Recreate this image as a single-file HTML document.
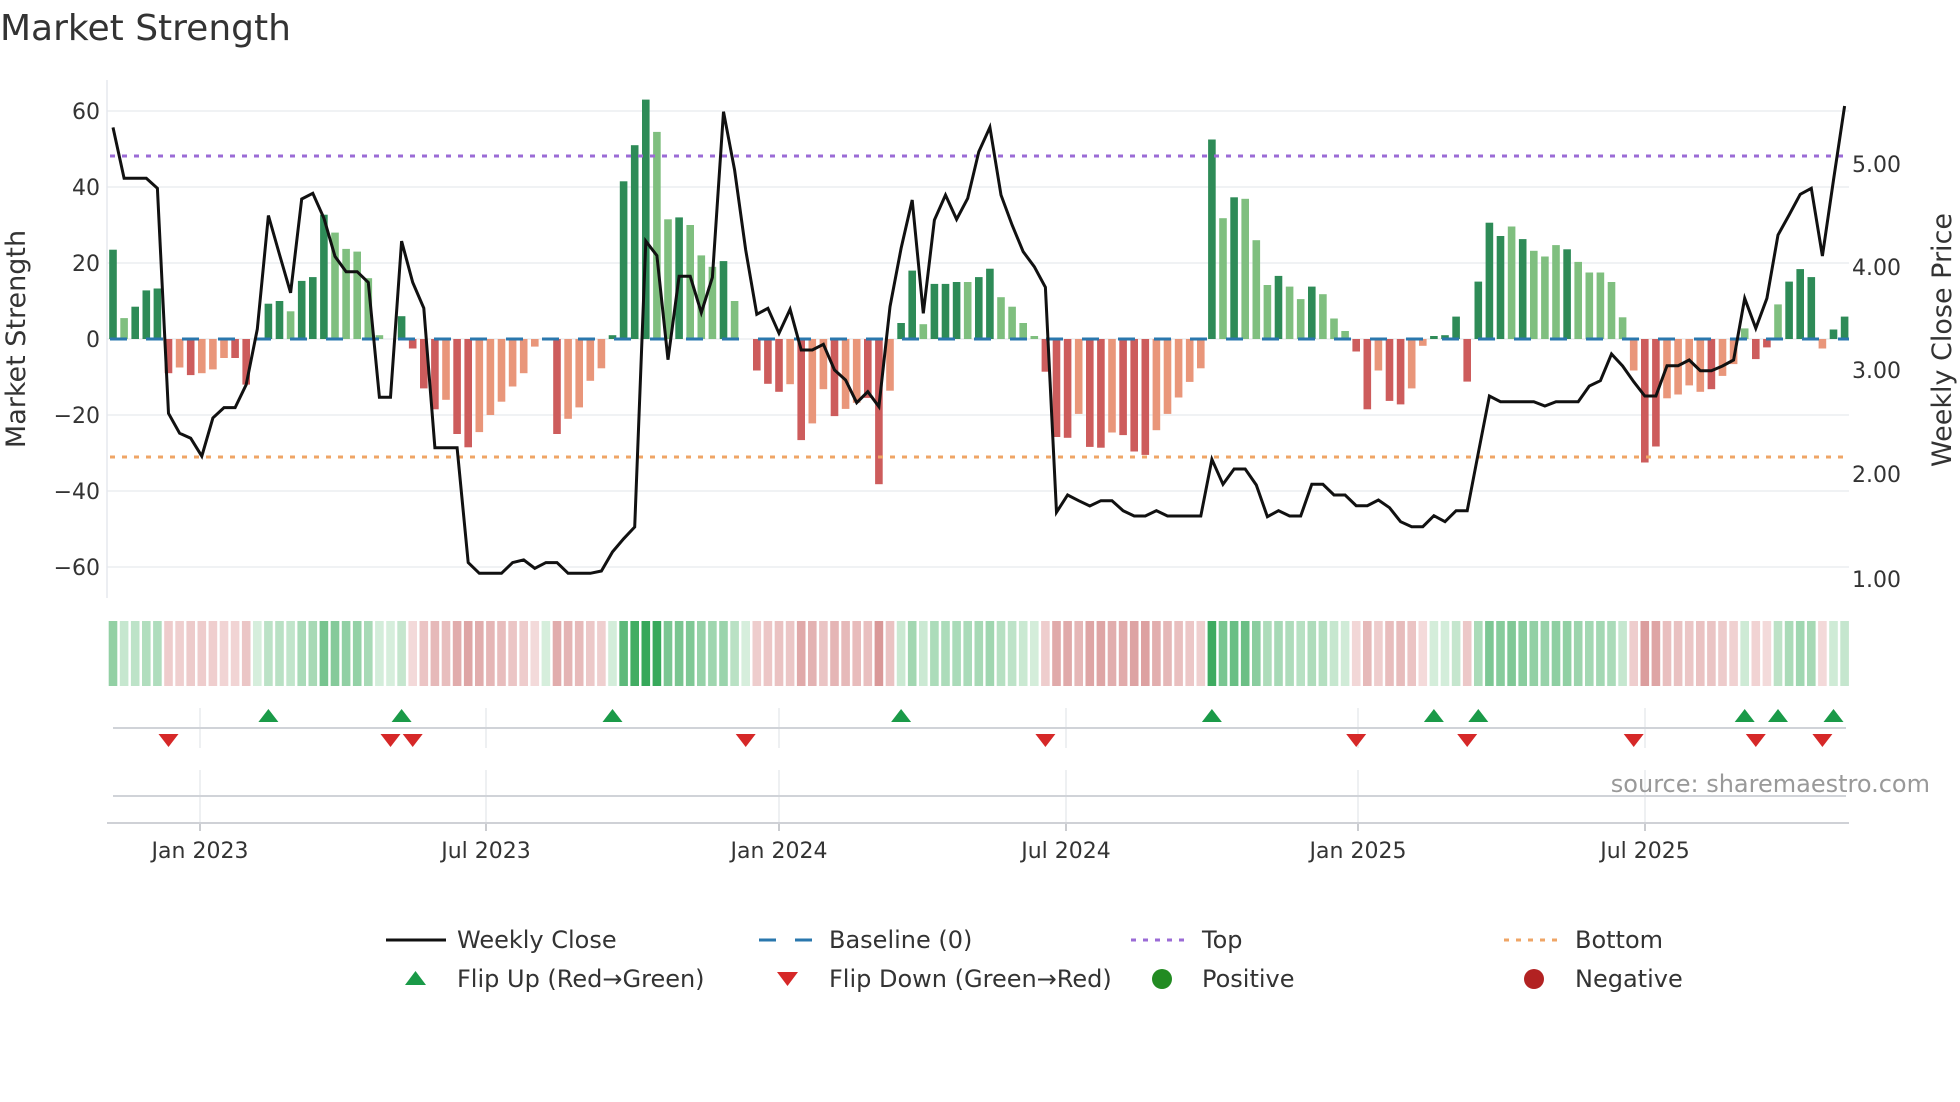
<!DOCTYPE html>
<html><head><meta charset="utf-8">
<style>
html,body{margin:0;padding:0;background:#fff;}
svg{display:block;font-family:"DejaVu Sans","Liberation Sans",sans-serif;}
</style></head>
<body>
<svg id="s" width="1960" height="1102" viewBox="0 0 1960 1102" xmlns="http://www.w3.org/2000/svg">
<rect width="1960" height="1102" fill="#fff"/>
<text x="0" y="40" font-size="36" fill="#333">Market Strength</text>

<g stroke="#eceef1" stroke-width="1.5">
<line x1="107" x2="1849" y1="111" y2="111"/>
<line x1="107" x2="1849" y1="187" y2="187"/>
<line x1="107" x2="1849" y1="263" y2="263"/>
<line x1="107" x2="1849" y1="339" y2="339"/>
<line x1="107" x2="1849" y1="415" y2="415"/>
<line x1="107" x2="1849" y1="491" y2="491"/>
<line x1="107" x2="1849" y1="567" y2="567"/>
</g>
<line x1="107" x2="107" y1="80" y2="598" stroke="#e6e8ee" stroke-width="1.5"/>

<g font-size="22" fill="#333" text-anchor="end">
<text x="100" y="119">60</text>
<text x="100" y="195">40</text>
<text x="100" y="271">20</text>
<text x="100" y="347">0</text>
<text x="100" y="423">−20</text>
<text x="100" y="499">−40</text>
<text x="100" y="575">−60</text>
</g>
<g font-size="22" fill="#333">
<text x="1852" y="172">5.00</text>
<text x="1852" y="275">4.00</text>
<text x="1852" y="378">3.00</text>
<text x="1852" y="482">2.00</text>
<text x="1852" y="587">1.00</text>
</g>
<text transform="translate(25,339) rotate(-90)" font-size="27" fill="#333" text-anchor="middle">Market Strength</text>
<text transform="translate(1951,340) rotate(-90)" font-size="27" fill="#333" text-anchor="middle">Weekly Close Price</text>

<g id="bars"></g>
<line x1="110" x2="1849" y1="339" y2="339" stroke="#2a77ad" stroke-width="3" stroke-dasharray="17 19"/>
<line x1="110" x2="1849" y1="156" y2="156" stroke="#9b6bd6" stroke-width="3" stroke-dasharray="5 7"/>
<line x1="110" x2="1849" y1="457" y2="457" stroke="#efa566" stroke-width="3" stroke-dasharray="5 7"/>
<polyline id="close" fill="none" stroke="#111" stroke-width="3" stroke-linejoin="miter"/>

<g id="heat"></g>

<g stroke="#e8eaee" stroke-width="1.5" id="vgrid"></g>
<line x1="113" x2="1846" y1="728" y2="728" stroke="#d0d3d8" stroke-width="2"/>
<line x1="113" x2="1846" y1="796" y2="796" stroke="#d0d3d8" stroke-width="2"/>
<line x1="107" x2="1849" y1="823" y2="823" stroke="#cfd1d6" stroke-width="2"/>
<g id="marks"></g>
<text x="1930" y="792" font-size="24" fill="#999" text-anchor="end">source: sharemaestro.com</text>

<g font-size="22" fill="#333" text-anchor="middle">
<text x="200" y="858">Jan 2023</text>
<text x="486" y="858">Jul 2023</text>
<text x="779" y="858">Jan 2024</text>
<text x="1066" y="858">Jul 2024</text>
<text x="1358" y="858">Jan 2025</text>
<text x="1645" y="858">Jul 2025</text>
</g>

<line x1="386" x2="446" y1="940" y2="940" stroke="#111" stroke-width="3"/>
<line x1="759" x2="813" y1="940" y2="940" stroke="#2a77ad" stroke-width="3" stroke-dasharray="17 19"/>
<line x1="1131" x2="1186" y1="940" y2="940" stroke="#9b6bd6" stroke-width="3" stroke-dasharray="5 7"/>
<line x1="1504" x2="1558" y1="940" y2="940" stroke="#efa566" stroke-width="3" stroke-dasharray="5 7"/>
<polygon points="405,985 426,985 415.5,971" fill="#1a9a48"/>
<polygon points="777,972 798,972 787.5,986" fill="#d62828"/>
<circle cx="1162" cy="979" r="10" fill="#228b22"/>
<circle cx="1534" cy="979" r="10" fill="#b22222"/>
<g font-size="24" fill="#333">
<text x="457" y="948">Weekly Close</text>
<text x="829" y="948">Baseline (0)</text>
<text x="1202" y="948">Top</text>
<text x="1575" y="948">Bottom</text>
<text x="457" y="987">Flip Up (Red→Green)</text>
<text x="829" y="987">Flip Down (Green→Red)</text>
<text x="1202" y="987">Positive</text>
<text x="1575" y="987">Negative</text>
</g>
</svg>
<script>
(function(){
var NS="http://www.w3.org/2000/svg";
var v=[23.5,5.5,8.5,12.8,13.3,-9,-7.5,-9.5,-9,-8,-5,-5,-12,0,9.3,10,7.3,15.3,16.3,32.7,28,23.7,23,16,1,0,6,-2.5,-13,-18.5,-16,-25,-28.5,-24.5,-20,-16.5,-12.5,-9,-2,0,-25,-21,-18,-11,-7.7,1,41.5,51,63,54.5,31.5,32,30,22,19,20.5,10,0,-8.3,-11.8,-13.9,-11.9,-26.6,-22.2,-13.2,-20.3,-18.4,-16.8,-15.5,-38.2,-13.6,4.2,18,3.9,14.5,14.5,15,15,16.3,18.5,11,8.5,4.2,0.8,-8.6,-25.8,-26,-19.7,-28.4,-28.6,-24.6,-25.3,-29.6,-30.5,-24,-19.7,-15.4,-11.3,-7.7,52.5,31.8,37.3,36.9,26,14.2,16.6,13.8,10.5,13.8,11.8,5.4,2.1,-3.3,-18.5,-8.3,-16.3,-17.2,-13,-1.8,0.8,1,5.9,-11.2,15.1,30.6,27.1,29.6,26.3,23.2,21.7,24.7,23.6,20.3,17.5,17.5,15,5.7,-8.3,-32.5,-28.3,-15.6,-14.6,-12.2,-13.9,-13.2,-9.7,-6.6,2.8,-5.3,-2.2,9.1,15.1,18.4,16.3,-2.5,2.5,5.9];
var d="DLDDDDLDLLLDDXDDLDDDLLLLLXDDDDLDDLLLLLLXDLLLLDDDDLLDLLLDLXDDDLDLLDLLDDLDDLDDDLDDLLLLDDDLDDLDDDLLLLLDLDLLLDLLDLLLDDLDDLLDDDDDDDLDLLLDLLLLLLDDLLLLDLLLDDLDDDLDDD";
var y=[127.4,178.3,178.3,178.3,188.3,413.3,433.2,438.2,456.2,417.9,407.6,407.6,384.6,329.1,215.5,254.5,292.8,199,193.3,218.1,256.4,271.7,271.7,282.4,397.2,397.2,241.1,282.4,308.1,447.8,447.8,447.8,562.6,573.3,573.3,573.3,562.6,559.9,568.3,562.6,562.6,573.3,573.3,573.3,571,551.9,538.8,527,241.1,255.6,359.7,276.3,276.3,312.7,277.3,111.7,170,250,314.3,308.3,333.3,309.3,350,350,344.3,370,380,402.7,391.7,406.7,306.7,248.3,200,313.3,220,195,219.3,198.3,151.7,127.3,195,225,251.7,266.7,287.3,512.3,495,500.7,506,500.7,500.7,510.7,516,516,510.7,516,516,516,516,459.3,484.3,469,469,485,516.7,510.7,516,516,484.3,484.3,495,495,505.7,505.7,500,507.7,521.7,526.7,526.7,515.7,521.7,510.7,510.7,453,396,401.7,401.7,401.7,401.7,406,401.7,401.7,401.7,386,380.7,354,366,381.7,396,396,365.7,365.7,360,370.7,370.7,366,360,298.3,328.3,298.3,235,215,194.3,188.3,256,180,106];
function X(i){return 113+11.1*i;}
function el(t,a,p){var e=document.createElementNS(NS,t);for(var k in a)e.setAttribute(k,a[k]);p.appendChild(e);return e;}
var bars=document.getElementById('bars'),heat=document.getElementById('heat'),marks=document.getElementById('marks'),vg=document.getElementById('vgrid');
var pts=[];
for(var i=0;i<v.length;i++){
  var val=v[i],x=X(i),dk=d.charAt(i)==='D';
  if(val!==0){
    var h=Math.abs(val)*3.8,top=val>0?339-h:339;
    var c=val>0?(dk?'#2e8b57':'#7fbf7f'):(dk?'#cd5c5c':'#e9967a');
    el('rect',{x:(x-3.8).toFixed(1),y:top.toFixed(1),width:7.6,height:Math.max(h,1).toFixed(1),fill:c},bars);
  }
  var t,col;
  if(val>=0){t=Math.min(Math.abs(val)/55,1);col='rgb('+Math.round(214-t*160)+','+Math.round(238-t*70)+','+Math.round(220-t*130)+')';}
  else{t=Math.min(Math.abs(val)/35,1);col='rgb('+Math.round(245-t*28)+','+Math.round(222-t*70)+','+Math.round(222-t*70)+')';}
  el('rect',{x:(x-4.3).toFixed(1),y:621,width:8.6,height:65,fill:col},heat);
  pts.push(x.toFixed(1)+','+y[i]);
}
document.getElementById('close').setAttribute('points',pts.join(' '));
[200,486,779,1066,1358,1645].forEach(function(tx){
  el('line',{x1:tx,x2:tx,y1:708,y2:748},vg);
  el('line',{x1:tx,x2:tx,y1:770,y2:823},vg);
  el('line',{x1:tx,x2:tx,y1:823,y2:831,stroke:'#b8bbc0'},vg);
});
[14,26,45,71,99,119,123,147,150,155].forEach(function(i){var x=X(i);
  el('polygon',{points:(x-10)+',722 '+(x+10)+',722 '+x+',709',fill:'#1a9a48'},marks);});
[5,25,27,57,84,112,122,137,148,154].forEach(function(i){var x=X(i);
  el('polygon',{points:(x-10)+',734 '+(x+10)+',734 '+x+',747',fill:'#d62828'},marks);});
})();
</script>
</body></html>
